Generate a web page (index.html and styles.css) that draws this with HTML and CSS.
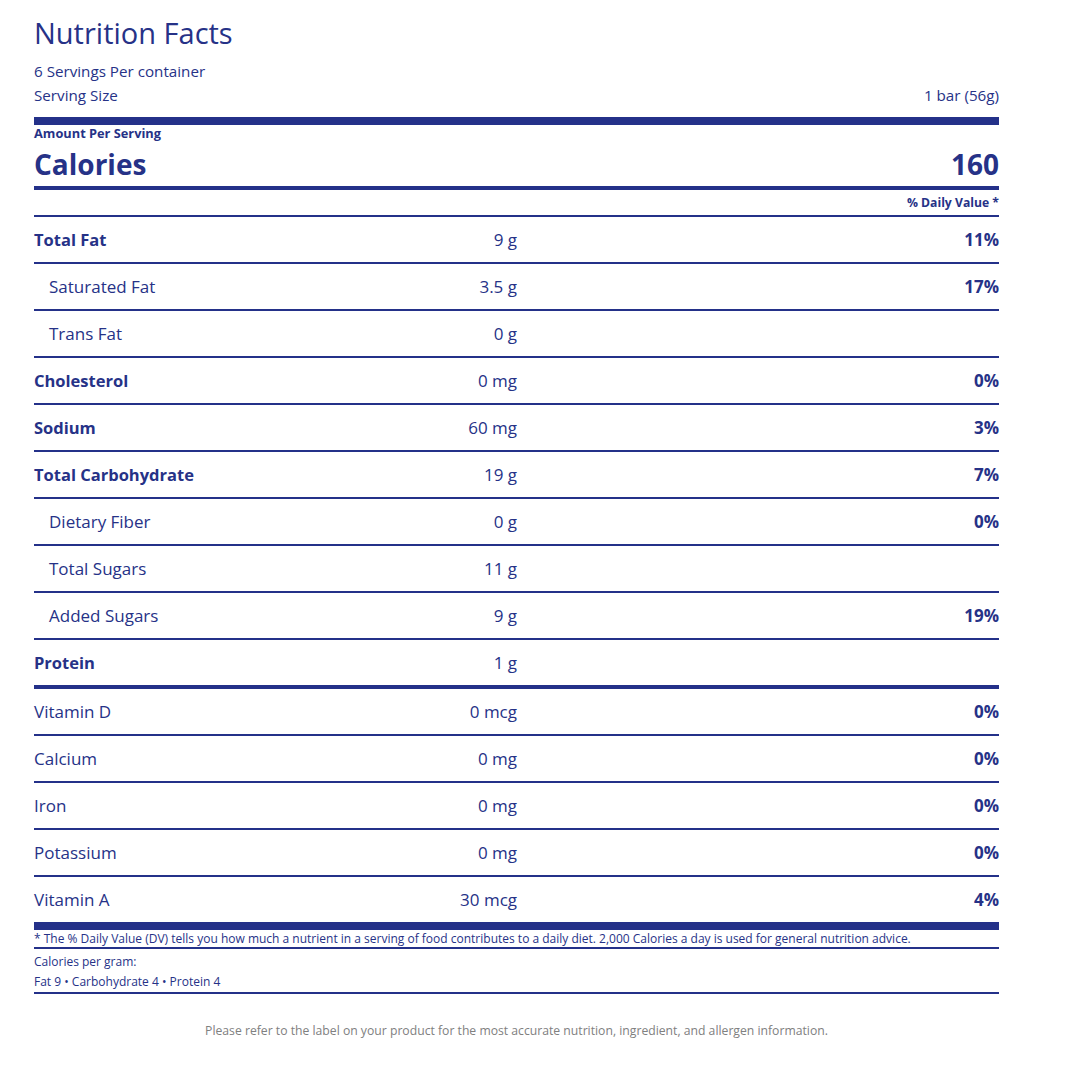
FILE: index.html
```html
<!DOCTYPE html>
<html lang="en">
<head>
<meta charset="utf-8">
<title>Nutrition Facts</title>
<link rel="stylesheet" href="styles.css">
</head>
<body>
<div class="label">
  <h1 class="title">Nutrition Facts</h1>
  <div class="line-text first">6 Servings Per container</div>
  <div class="line-text split"><span>Serving Size</span><span>1 bar (56g)</span></div>
  <div class="bar-thick top"></div>
  <div class="amount">Amount Per Serving</div>
  <div class="calories"><span>Calories</span><span>160</span></div>
  <div class="bar-medium"></div>
  <div class="dv">% Daily Value *</div>

  <div class="row bold"><span class="name">Total Fat</span><span class="qty">9 g</span><span class="pct">11%</span></div>
  <div class="row sub"><span class="name">Saturated Fat</span><span class="qty">3.5 g</span><span class="pct">17%</span></div>
  <div class="row sub"><span class="name">Trans Fat</span><span class="qty">0 g</span><span class="pct"></span></div>
  <div class="row bold"><span class="name">Cholesterol</span><span class="qty">0 mg</span><span class="pct">0%</span></div>
  <div class="row bold"><span class="name">Sodium</span><span class="qty">60 mg</span><span class="pct">3%</span></div>
  <div class="row bold"><span class="name">Total Carbohydrate</span><span class="qty">19 g</span><span class="pct">7%</span></div>
  <div class="row sub"><span class="name">Dietary Fiber</span><span class="qty">0 g</span><span class="pct">0%</span></div>
  <div class="row sub"><span class="name">Total Sugars</span><span class="qty">11 g</span><span class="pct"></span></div>
  <div class="row sub"><span class="name">Added Sugars</span><span class="qty">9 g</span><span class="pct">19%</span></div>
  <div class="row bold end"><span class="name">Protein</span><span class="qty">1 g</span><span class="pct"></span></div>

  <div class="row vit"><span class="name">Vitamin D</span><span class="qty">0 mcg</span><span class="pct">0%</span></div>
  <div class="row vit"><span class="name">Calcium</span><span class="qty">0 mg</span><span class="pct">0%</span></div>
  <div class="row vit"><span class="name">Iron</span><span class="qty">0 mg</span><span class="pct">0%</span></div>
  <div class="row vit"><span class="name">Potassium</span><span class="qty">0 mg</span><span class="pct">0%</span></div>
  <div class="row vit last"><span class="name">Vitamin A</span><span class="qty">30 mcg</span><span class="pct">4%</span></div>
  <div class="bar-thick"></div>

  <p class="footnote">* The % Daily Value (DV) tells you how much a nutrient in a serving of food contributes to a daily diet. 2,000 Calories a day is used for general nutrition advice.</p>
  <div class="per-gram">
    <div>Calories per gram:</div>
    <div>Fat 9 &bull; Carbohydrate 4 &bull; Protein 4</div>
  </div>
  <p class="disclaimer">Please refer to the label on your product for the most accurate nutrition, ingredient, and allergen information.</p>
</div>
</body>
</html>
```

FILE: styles.css
```css
* { box-sizing: border-box; }
body {
  margin: 0;
  background: #fff;
  font-family: "Open Sans", "Noto Sans", sans-serif;
  color: #263287;
}
.label {
  width: 965px;
  margin-left: 34px;
  padding-top: 14px;
}
.title {
  margin: 0;
  font-size: 29px;
  font-weight: 400;
  line-height: 38px;
}
.line-text {
  font-size: 15.2px;
  font-weight: 500;
  line-height: 24px;
}
.line-text.first { margin-top: 7px; }
.split {
  display: flex;
  justify-content: space-between;
}
.bar-thick {
  height: 8px;
  background: #243189;
}
.bar-thick.top { margin-top: 10px; }
.amount {
  font-size: 12.8px;
  font-weight: 700;
  line-height: 17px;
}
.calories {
  display: flex;
  justify-content: space-between;
  font-size: 28px;
  font-weight: 700;
  line-height: 44px;
}
.bar-medium {
  height: 4px;
  background: #243189;
}
.dv {
  text-align: right;
  font-size: 12.2px;
  font-weight: 700;
  line-height: 25px;
  border-bottom: 2px solid #243189;
}
.row {
  display: grid;
  grid-template-columns: 1fr 120px 482px;
  align-items: center;
  height: 47px;
  border-bottom: 2px solid #243189;
  font-size: 17px;
  font-weight: 500;
}
.row .qty { text-align: right; }
.row .pct { text-align: right; font-weight: 700; }
.row.bold .name { font-weight: 700; font-size: 16.5px; }
.row.sub .name { padding-left: 15px; }
.row.end { border-bottom-width: 4px; height: 49px; }
.row.last { border-bottom: 0; height: 45px; }
.footnote {
  margin: 0;
  font-size: 12px;
  font-weight: 500;
  line-height: 17px;
  border-bottom: 2px solid #243189;
}
.per-gram {
  font-size: 12px;
  font-weight: 500;
  line-height: 20px;
  padding-top: 3px;
  border-bottom: 2px solid #243189;
}
.disclaimer {
  margin: 29px 0 0;
  text-align: center;
  font-size: 12.2px;
  line-height: 16px;
  color: #808080;
}
```
